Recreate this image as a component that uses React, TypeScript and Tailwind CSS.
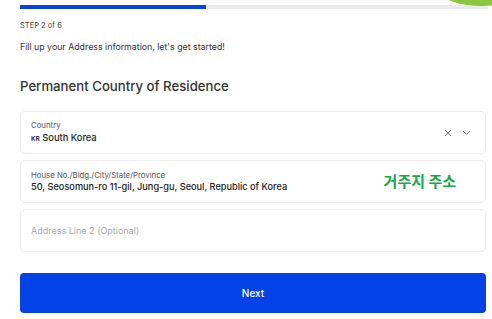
import React from "react";

export default function App() {
  return (
    <div
      className="relative w-[492px] h-[319px] bg-white overflow-hidden text-[#222]"
      style={{ fontFamily: "Inter, 'Noto Sans CJK KR', sans-serif" }}
    >
      <div className="absolute -top-[22px] right-[-30px] w-[80px] h-[28px] rounded-[50%] bg-[#8cc63f]" />
      <div className="w-[488px] pl-[20px] pt-[5px]">
        <div className="h-[4px] bg-[#ebebeb] flex">
          <div className="w-[186px] h-full bg-[#0640e6]" />
        </div>
        <div className="mt-[12px] text-[7.5px] text-[#444] leading-[10px]">STEP 2 of 6</div>
        <div className="mt-[10px] text-[8.8px] text-[#333] leading-[12px]">
          Fill up your Address information, let's get started!
        </div>
        <div className="mt-[25px] text-[13.2px] font-medium text-[#333] leading-[16px]">
          Permanent Country of Residence
        </div>
        <div className="mt-[17px] w-[466px] flex flex-col gap-[6px]">
          <div className="h-[43px] rounded-[5px] border border-[#ececec] flex items-center px-[10px]">
            <div className="flex-1 flex flex-col">
              <span className="text-[7.8px] text-[#555] leading-[10px]">Country</span>
              <span className="text-[9.3px] font-medium text-[#222] leading-[13px] mt-[1px]">
                <span className="text-[6.5px] font-semibold">KR</span> South Korea
              </span>
            </div>
            <div className="flex items-center gap-[10px] text-[#777] mr-[4px]">
              <svg width="8" height="8" viewBox="0 0 8 8" fill="none" stroke="currentColor" strokeWidth="1">
                <path d="M1 1 L7 7 M7 1 L1 7" />
              </svg>
              <svg width="9" height="6" viewBox="0 0 9 6" fill="none" stroke="currentColor" strokeWidth="1">
                <path d="M1 1 L4.5 4.5 L8 1" />
              </svg>
            </div>
          </div>
          <div className="h-[43px] rounded-[5px] border border-[#ececec] flex items-center px-[10px]">
            <div className="flex-1 flex flex-col">
              <span className="text-[7.8px] text-[#555] leading-[10px]">House No./Bldg./City/State/Province</span>
              <span className="text-[9.2px] font-medium text-[#222] leading-[13px]">
                50, Seosomun-ro 11-gil, Jung-gu, Seoul, Republic of Korea
              </span>
            </div>
            <span
              className="text-[15px] font-bold text-[#17a84a] mr-[19px]"
              style={{ fontFamily: "'Noto Sans CJK KR', sans-serif" }}
            >
              거주지 주소
            </span>
          </div>
          <div className="h-[43px] rounded-[5px] border border-[#ececec] flex items-center px-[10px]">
            <span className="text-[9px] text-[#aaa]">Address Line 2 (Optional)</span>
          </div>
        </div>
        <button className="mt-[21px] w-[466px] h-[40px] rounded-[4px] bg-[#0342e6] text-white text-[10px] font-medium">
          Next
        </button>
      </div>
    </div>
  );
}
